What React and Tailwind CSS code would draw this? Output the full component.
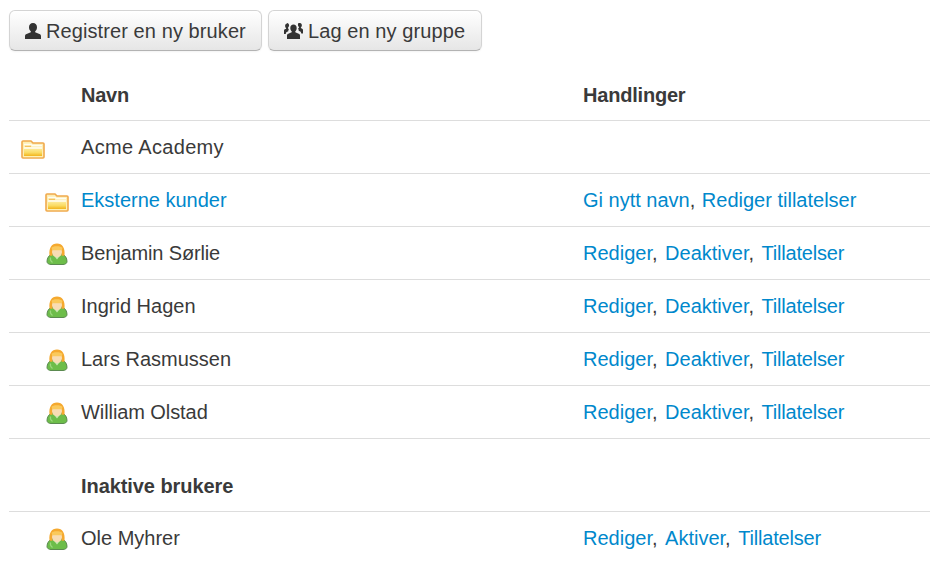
const users = [
  { name: "Benjamin Sørlie", track: "tracking-[-0.14px]" },
  { name: "Ingrid Hagen", track: "" },
  { name: "Lars Rasmussen", track: "" },
  { name: "William Olstad", track: "tracking-[-0.08px]" },
];

function FolderIcon() {
  return (
    <svg width="24" height="20" viewBox="0 0 24 20" className="block mt-[4px]">
      <defs>
        <linearGradient id="folderFill" x1="0" y1="0" x2="0" y2="1">
          <stop offset="0" stopColor="#fdeb9c" />
          <stop offset="0.55" stopColor="#fadb62" />
          <stop offset="1" stopColor="#f2b41c" />
        </linearGradient>
      </defs>
      <path d="M2 2h8l2 2h10a1 1 0 0 1 1 1v13a1 1 0 0 1-1 1h-20a1 1 0 0 1-1-1v-15a1 1 0 0 1 1-1z" fill="#fdeeb4" stroke="#f0a94c" strokeWidth="1.600" />
      <path d="M3 9.500h18v7.500h-18z" fill="url(#folderFill)" />
      <path d="M3 5.500h7l1.500 1h9.500" fill="none" stroke="#fffdf2" strokeWidth="1.300" />
      <path d="M3 9h18" stroke="#fffdf0" strokeWidth="1.500" />
      <path d="M4 6.800h6v1h-6z" fill="#f2b84a" />
      <path d="M3 17.600h18" stroke="#fff1b4" strokeWidth="1" />
    </svg>
  );
}

function UserIcon() {
  return (
    <svg width="24" height="24" viewBox="0 0 24 24" className="block mt-[2px]">
      <path d="M2 19.500c0-3.500 2-6.500 5-7.500h10c3 1 5 4 5 7.500 0 2-2 3-4 3h-12c-2 0-4-1-4-3z" fill="#6dbd4a" stroke="#5b8a50" strokeWidth="1" />
      <path d="M5.500 15.500c-.5 2 .5 4 2 5" fill="none" stroke="#9ad77c" strokeWidth="1.200" />
      <path d="M8 12.500l4 5 4-5z" fill="#cfe8b4" />
      <path d="M4.500 13.500c-.8-7.500 2-12 7.500-12s8.300 4.500 7.500 12c-1 .4-2 .4-3 0v-5h-9v5c-1 .4-2 .4-3 0z" fill="#f5a92f" />
      <path d="M7.500 7c2 .5 7 .5 9 0v4.500c0 2-2 3.500-4.500 3.500s-4.500-1.500-4.500-3.500z" fill="#f8dcb4" />
      <path d="M6.500 6c1-2.200 9.500-2.200 11 0l-1 2c-2 .4-7 .4-9 0z" fill="#fac95c" />
    </svg>
  );
}

function PersonGlyph() {
  return (
    <svg width="16" height="16" viewBox="0 0 16 16" className="block">
      <path d="M8 0c2.500 0 4 1.700 4 4.200 0 1.700-.7 3.300-1.800 4.100v1l4.200 1.600c1 .4 1.600 1.100 1.600 2.100v3h-16v-3c0-1 .6-1.700 1.600-2.100l4.200-1.600v-1c-1.100-.8-1.800-2.400-1.800-4.100 0-2.500 1.500-4.200 4-4.200z" fill="#333" />
    </svg>
  );
}

function GroupGlyph() {
  return (
    <svg width="19" height="16" viewBox="0 0 19 16" className="block">
      <path d="M9.500 1.500c2 0 3.200 1.500 3.200 3.500 0 1.400-.6 2.600-1.400 3.300v1l3.400 1.400c.9.400 1.300 1 1.300 1.800v3.500h-13v-3.500c0-.8.4-1.400 1.300-1.800l3.400-1.400v-1c-.8-.7-1.400-1.900-1.400-3.300 0-2 1.200-3.500 3.200-3.500z" fill="#333" />
      <path d="M3 0c1.300 0 2.100 1 2.100 2.300 0 1-.4 1.800-1 2.300v1.100l.9.400c-.6.800-.7 1.400-.7 2.200l-2 1-.6 1.700h-1.700v-3.500c0-.6.300-1 .8-1.200l1.300-.6v-.5c-.6-.5-1-1.300-1-2.300 0-1.300.8-2.300 1.900-2.300z" fill="#333" />
      <path d="M16 0c1.100 0 1.900 1 1.900 2.300 0 1-.4 1.800-1 2.300v.5l1.300.6c.5.2.8.6.8 1.200v3.500h-1.700l-.6-1.700-2-1c0-.8-.1-1.400-.7-2.200l.9-.4v-1.100c-.6-.5-1-1.300-1-2.300 0-1.300.8-2.300 2.100-2.300z" fill="#333" />
    </svg>
  );
}

function Row({ icon, indent, name, isLink, actions = [], linkGap = "ml-[2px]", track = "", last }) {
  return (
    <div className={`flex items-center h-[53px] border-b ${last ? "border-transparent" : "border-[#dddddd]"}`}>
      <div className={`w-[72px] shrink-0 ${indent ? "pl-[36px]" : "pl-[12px]"}`}>{icon}</div>
      <div className={`w-[502px] shrink-0 ${track} ${isLink ? "text-[#0088cc]" : ""}`}>{name}</div>
      <div>
        {actions.map((a, i) => (
          <span key={a}>
            {i > 0 && ", "}
            <a className={`text-[#0088cc] ${i > 0 ? linkGap : ""} ${a === "Tillatelser" ? "tracking-[-0.2px]" : ""}`}>{a}</a>
          </span>
        ))}
      </div>
    </div>
  );
}

export default function App() {
  const btn = "flex items-center gap-[5px] h-[41px] rounded-[6px] border border-[#d4d4d4] border-b-[#b3b3b3] bg-gradient-to-b from-white to-[#e6e6e6] shadow-[inset_0_1px_0_rgba(255,255,255,0.2),0_1px_2px_rgba(0,0,0,0.05)] tracking-[0.09px] text-[#3a3a3a]";
  return (
    <div className="w-[930px] h-[580px] overflow-hidden bg-white pl-[9px] pt-[10px] text-[20px] leading-[30px] text-[#3a3a3a] font-['Liberation_Sans',Arial,sans-serif]">
      <div className="flex gap-[6px]">
        <button className={`${btn} w-[253px] pl-[15px]`}>
          <PersonGlyph />
          <span>Registrer en ny bruker</span>
        </button>
        <button className={`${btn} w-[214px] pl-[15px]`}>
          <GroupGlyph />
          <span>Lag en ny gruppe</span>
        </button>
      </div>

      <div className="w-[921px]">
        <div className="flex items-end h-[70px] pb-[10px] border-b border-[#dddddd] font-bold">
          <div className="w-[72px] shrink-0" />
          <div className="w-[502px] shrink-0 tracking-[-0.25px]">Navn</div>
          <div className="tracking-[-0.2px]">Handlinger</div>
        </div>

        <Row icon={<FolderIcon />} name="Acme Academy" track="tracking-[0.33px]" />
        <Row icon={<FolderIcon />} indent isLink name="Eksterne kunder" linkGap="ml-[1px]" actions={["Gi nytt navn", "Rediger tillatelser"]} />
        {users.map((u) => (
          <Row key={u.name} icon={<UserIcon />} indent name={u.name} track={u.track} actions={["Rediger", "Deaktiver", "Tillatelser"]} />
        ))}

        <div className="flex items-end h-[73px] pb-[10px] border-b border-[#dddddd] font-bold">
          <div className="w-[72px] shrink-0" />
          <div className="tracking-[-0.07px]">Inaktive brukere</div>
        </div>
        <Row icon={<UserIcon />} indent last name="Ole Myhrer" actions={["Rediger", "Aktiver", "Tillatelser"]} />
      </div>
    </div>
  );
}
